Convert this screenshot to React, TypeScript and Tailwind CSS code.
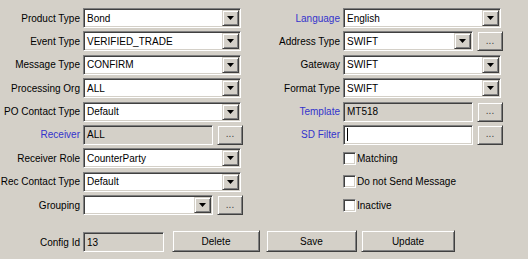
import React from "react";

const sunken =
  "border border-[#808080] border-r-white border-b-white shadow-[inset_1px_1px_0_#404040,inset_-1px_-1px_0_#d4d0c8]";
const raised =
  "border border-[#d4d0c8] border-r-[#404040] border-b-[#404040] shadow-[inset_1px_1px_0_#ffffff,inset_-1px_-1px_0_#808080] bg-[#d4d0c8]";

function Label({ text, blue }: { text: string; blue?: boolean }) {
  return (
    <div className={`w-[83px] shrink-0 pr-[3px] text-right whitespace-nowrap ${blue ? "text-[#3333cc]" : "text-black"}`}>
      {text}
    </div>
  );
}

function Arrow() {
  return (
    <svg width="7" height="4" viewBox="0 0 7 4">
      <polygon points="0,0 7,0 3.5,4" fill="#000" />
    </svg>
  );
}

function Combo({ value, width }: { value: string; width: number }) {
  return (
    <div className={`${sunken} bg-white h-[20px] flex p-[1px]`} style={{ width }}>
      <div className="flex-1 pl-[2px] flex items-center whitespace-nowrap overflow-hidden">{value}</div>
      <div className={`${raised} w-[17px] flex items-center justify-center`}>
        <Arrow />
      </div>
    </div>
  );
}

function TextBox({ value, width, disabled, cursor }: { value: string; width: number; disabled?: boolean; cursor?: boolean }) {
  return (
    <div
      className={`${sunken} h-[20px] flex items-center pl-[3px] whitespace-nowrap ${disabled ? "bg-[#d4d0c8]" : "bg-white"}`}
      style={{ width }}
    >
      {cursor && <div className="w-[1px] h-[13px] bg-black" />}
      {value}
    </div>
  );
}

function Dots() {
  return (
    <div className={`${raised} ml-[4px] w-[26px] h-[20px] flex items-center justify-center text-[#404040] pb-[2px]`}>
      ...
    </div>
  );
}

function Check({ text }: { text: string }) {
  return (
    <div className="flex items-center h-[20px]">
      <div className="w-[83px] shrink-0" />
      <div className={`${sunken} bg-white w-[13px] h-[13px]`} />
      <span className="ml-[1px]">{text}</span>
    </div>
  );
}

function Row({ children }: { children: React.ReactNode }) {
  return <div className="flex items-center h-[20px]">{children}</div>;
}

function Button({ text, width, ml }: { text: string; width: string; ml: string }) {
  return (
    <div className={`${raised} ${width} ${ml} h-[22px] flex items-center justify-center text-black`}>{text}</div>
  );
}

export default function App() {
  return (
    <div className="w-[528px] h-[259px] bg-[#d4d0c8] font-['Liberation_Sans',Arial,sans-serif] text-[10px] text-black overflow-hidden">
      <div className="flex pt-[8px]">
        <div className="w-[260px] flex flex-col gap-[3.4px]">
          <Row><Label text="Product Type" /><Combo value="Bond" width={158} /></Row>
          <Row><Label text="Event Type" /><Combo value="VERIFIED_TRADE" width={158} /></Row>
          <Row><Label text="Message Type" /><Combo value="CONFIRM" width={158} /></Row>
          <Row><Label text="Processing Org" /><Combo value="ALL" width={158} /></Row>
          <Row><Label text="PO Contact Type" /><Combo value="Default" width={158} /></Row>
          <Row><Label text="Receiver" blue /><TextBox value="ALL" width={130} disabled /><Dots /></Row>
          <Row><Label text="Receiver Role" /><Combo value="CounterParty" width={158} /></Row>
          <Row><Label text="Rec Contact Type" /><Combo value="Default" width={158} /></Row>
          <Row><Label text="Grouping" /><Combo value="" width={130} /><Dots /></Row>
        </div>
        <div className="flex flex-col gap-[3.4px]">
          <Row><Label text="Language" blue /><Combo value="English" width={158} /></Row>
          <Row><Label text="Address Type" /><Combo value="SWIFT" width={130} /><Dots /></Row>
          <Row><Label text="Gateway" /><Combo value="SWIFT" width={158} /></Row>
          <Row><Label text="Format Type" /><Combo value="SWIFT" width={158} /></Row>
          <Row><Label text="Template" blue /><TextBox value="MT518" width={130} disabled /><Dots /></Row>
          <Row><Label text="SD Filter" blue /><TextBox value="" width={130} cursor /><Dots /></Row>
          <Check text="Matching" />
          <Check text="Do not Send Message" />
          <Check text="Inactive" />
        </div>
      </div>
      <div className="flex items-end mt-[15px]">
        <div className="flex items-center h-[20px]">
          <Label text="Config Id" />
          <TextBox value="13" width={81} disabled />
        </div>
        <Button text="Delete" width="w-[88px]" ml="ml-[8px]" />
        <Button text="Save" width="w-[91px]" ml="ml-[6px]" />
        <Button text="Update" width="w-[94px]" ml="ml-[4px]" />
      </div>
    </div>
  );
}
